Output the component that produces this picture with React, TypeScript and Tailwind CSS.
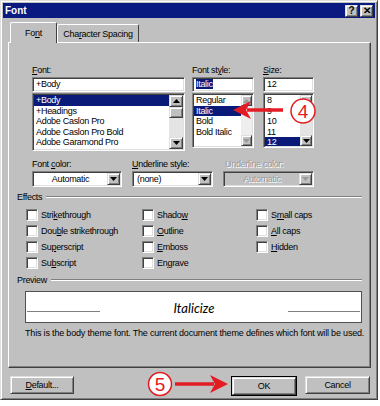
import React from "react";

const sunken =
  "border border-t-[#808080] border-l-[#808080] border-r-white border-b-white shadow-[inset_1px_1px_0_#404040,inset_-1px_-1px_0_#dfdfdf]";
const raised =
  "border border-t-[#dfdfdf] border-l-[#dfdfdf] border-r-[#404040] border-b-[#404040] shadow-[inset_1px_1px_0_#ffffff,inset_-1px_-1px_0_#808080]";

function Tri({ up, dim }: { up?: boolean; dim?: boolean }) {
  return (
    <svg width="7" height="4" viewBox="0 0 7 4">
      <path d={up ? "M3.5 0L7 4H0Z" : "M0 0h7L3.5 4Z"} fill={dim ? "#9a9a9a" : "#000"} />
    </svg>
  );
}

function ScrollBtn({ up, dim, h = 12 }: { up?: boolean; dim?: boolean; h?: number }) {
  return (
    <div
      className={`${raised} flex items-center justify-center bg-[#c0c0c0]`}
      style={{ height: h }}
    >
      <Tri up={up} dim={dim} />
    </div>
  );
}

function ListBox({
  items,
  selected,
  width,
  height,
  bar,
}: {
  items: string[];
  selected: number;
  width: number;
  height: number;
  bar: React.ReactNode;
}) {
  return (
    <div className={`${sunken} flex bg-white p-[1px]`} style={{ width, height }}>
      <div className="flex-1 overflow-hidden">
        {items.map((it, i) => (
          <div
            key={it}
            className={`h-[10.5px] px-[2px] leading-[10.5px] whitespace-nowrap ${
              i === selected ? "bg-[#0a1a78] text-white" : ""
            }`}
          >
            {it}
          </div>
        ))}
      </div>
      {bar}
    </div>
  );
}

function Dropdown({
  width,
  text,
  center,
  disabled,
}: {
  width: number;
  text: string;
  center?: boolean;
  disabled?: boolean;
}) {
  return (
    <div
      className={`${sunken} flex h-[16px] p-[1px] ${disabled ? "bg-[#c0c0c0]" : "bg-white"}`}
      style={{ width }}
    >
      <div
        className={`flex-1 px-[3px] leading-[12px] ${center ? "text-center" : ""} ${
          disabled ? "text-[#9a9a9a] [text-shadow:1px_1px_0_#fff]" : ""
        }`}
      >
        {text}
      </div>
      <div className={`${raised} flex w-[13px] items-center justify-center bg-[#c0c0c0]`}>
        <Tri dim={disabled} />
      </div>
    </div>
  );
}

function Check({ children }: { children: React.ReactNode }) {
  return (
    <div className="flex h-[16px] items-center">
      <div className={`${sunken} h-[12px] w-[12px] bg-white`} />
      <span className="ml-[3px]">{children}</span>
    </div>
  );
}

function GroupHead({ label }: { label: string }) {
  return (
    <div className="flex h-[12px] items-center">
      <span>{label}</span>
      <div className="ml-[4px] h-[2px] flex-1 border-t border-b border-t-[#808080] border-b-white" />
    </div>
  );
}

function Button({ width, children, def }: { width: number; children: React.ReactNode; def?: boolean }) {
  return (
    <div className={def ? "border border-black" : ""}>
      <div
        className={`${raised} flex h-[18px] items-center justify-center bg-[#c0c0c0]`}
        style={{ width: def ? width - 2 : width }}
      >
        {children}
      </div>
    </div>
  );
}

export default function App() {
  return (
    <div
      className="relative h-[406px] w-[380px] bg-white text-[9px] leading-[12px] tracking-[-0.3px] text-black"
      style={{ fontFamily: '"Liberation Sans", Arial, sans-serif' }}
    >
      <div className="flex h-[400px] w-[378px] flex-col border border-t-[#dfdfdf] border-l-[#dfdfdf] border-r-[#404040] border-b-[#404040] bg-[#c0c0c0] p-[2px] shadow-[inset_1px_1px_0_#ffffff,inset_-1px_-1px_0_#808080]">
        {/* title bar */}
        <div className="flex h-[15px] items-center justify-between bg-[#0a1a80] pl-[2px] pr-[2px]">
          <span className="text-[10px] font-bold tracking-normal text-white">Font</span>
          <div className="flex gap-[2px]">
            <div className={`${raised} flex h-[12px] w-[13px] items-center justify-center bg-[#c0c0c0] text-[10px] font-bold leading-none`}>
              ?
            </div>
            <div className={`${raised} flex h-[12px] w-[13px] items-center justify-center bg-[#c0c0c0] text-[10px] font-bold leading-none`}>
              ✕
            </div>
          </div>
        </div>

        {/* tabs */}
        <div className="mt-[4px] ml-[7px] flex h-[20px] items-end">
          <div className="relative z-10 -mb-[1px] flex h-[21px] w-[47px] items-center justify-center rounded-t-[2px] border border-b-0 border-t-white border-l-white border-r-[#404040] bg-[#c0c0c0]">
            Fo<u>n</u>t
          </div>
          <div className="flex h-[18px] w-[82px] items-center justify-center rounded-t-[2px] border border-b-0 border-t-white border-l-white border-r-[#404040] bg-[#c0c0c0]">
            Cha<u>r</u>acter Spacing
          </div>
        </div>

        {/* panel */}
        <div className="ml-[5px] flex h-[326px] w-[363px] flex-col border border-t-white border-l-white border-r-[#404040] border-b-[#404040] px-[8px] pt-[21px] shadow-[inset_-1px_-1px_0_#808080]">
          <div className="ml-[15px] flex">
            <div className="flex flex-col">
              <div className="h-[13px]">
                <u>F</u>ont:
              </div>
              <div className={`${sunken} h-[15px] w-[153px] bg-white px-[3px] leading-[13px]`}>+Body</div>
              <div className="mt-[1px]">
                <ListBox
                  width={153}
                  height={58}
                  selected={0}
                  items={["+Body", "+Headings", "Adobe Caslon Pro", "Adobe Caslon Pro Bold", "Adobe Garamond Pro"]}
                  bar={
                    <div className="flex w-[14px] flex-col bg-[#e4e4e4]">
                      <ScrollBtn up />
                      <div className={`${raised} h-[11px] bg-[#c0c0c0]`} />
                      <div className="flex-1" />
                      <ScrollBtn />
                    </div>
                  }
                />
              </div>
            </div>
            <div className="ml-[7px] flex flex-col">
              <div className="h-[13px]">
                Font st<u>y</u>le:
              </div>
              <div className={`${sunken} h-[15px] w-[62px] bg-white px-[3px] leading-[13px]`}>
                <span className="bg-[#0a1a78] text-white">Italic</span>
              </div>
              <div className="mt-[1px]">
                <ListBox
                  width={62}
                  height={55}
                  selected={1}
                  items={["Regular", "Italic", "Bold", "Bold Italic"]}
                  bar={
                    <div className="flex w-[11px] flex-col bg-[#eeeeee]">
                      <ScrollBtn up dim h={11} />
                      <div className="flex-1" />
                      <ScrollBtn dim h={11} />
                    </div>
                  }
                />
              </div>
            </div>
            <div className="ml-[9px] flex flex-col">
              <div className="h-[13px]">
                <u>S</u>ize:
              </div>
              <div className={`${sunken} h-[15px] w-[51px] bg-white px-[3px] leading-[13px]`}>12</div>
              <div className="mt-[1px]">
                <ListBox
                  width={51}
                  height={55}
                  selected={4}
                  items={["8", "9", "10", "11", "12"]}
                  bar={
                    <div className="flex w-[12px] flex-col bg-[#e4e4e4]">
                      <ScrollBtn up dim h={11} />
                      <div className="flex-1" />
                      <ScrollBtn h={11} />
                    </div>
                  }
                />
              </div>
            </div>
          </div>

          {/* row 2 */}
          <div className="mt-[7px] ml-[15px] flex">
            <div className="flex w-[100px] flex-col">
              <div className="h-[13px]">
                Font <u>c</u>olor:
              </div>
              <Dropdown width={90} text="Automatic" center />
            </div>
            <div className="flex w-[91px] flex-col">
              <div className="h-[13px]">
                <u>U</u>nderline style:
              </div>
              <Dropdown width={81} text="(none)" />
            </div>
            <div className="flex flex-col">
              <div className="h-[13px] pl-[2px] text-[#9a9a9a] [text-shadow:1px_1px_0_#fff]">Underline color:</div>
              <Dropdown width={91} text="Automatic" center disabled />
            </div>
          </div>

          {/* effects */}
          <div className="mt-[4px]">
            <GroupHead label="Effects" />
          </div>
          <div className="mt-[4px] ml-[9px] flex">
            <div className="w-[116px]">
              <Check>
                Stri<u>k</u>ethrough
              </Check>
              <Check>
                Dou<u>b</u>le strikethrough
              </Check>
              <Check>
                Su<u>p</u>erscript
              </Check>
              <Check>
                Su<u>b</u>script
              </Check>
            </div>
            <div className="w-[114px]">
              <Check>
                Shado<u>w</u>
              </Check>
              <Check>
                <u>O</u>utline
              </Check>
              <Check>
                <u>E</u>mboss
              </Check>
              <Check>
                En<u>g</u>rave
              </Check>
            </div>
            <div>
              <Check>
                S<u>m</u>all caps
              </Check>
              <Check>
                <u>A</u>ll caps
              </Check>
              <Check>
                <u>H</u>idden
              </Check>
            </div>
          </div>

          {/* preview */}
          <div className="mt-[3px]">
            <GroupHead label="Preview" />
          </div>
          <div className="mt-[5px] ml-[8px] flex h-[32px] items-end border border-[#505050] bg-white px-[1px] pb-[7px]">
            <div className="mb-[3px] h-px w-[73px] bg-[#808080]" />
            <div
              className="flex-1 text-center text-[13px] leading-[13px] tracking-normal italic"
              style={{ fontFamily: "Lato, 'Open Sans', sans-serif" }}
            >
              Italicize
            </div>
            <div className="mb-[3px] h-px w-[72px] bg-[#808080]" />
          </div>
          <div className="mt-[4px] ml-[8px] h-[12px] whitespace-nowrap tracking-[-0.18px]">
            This is the body theme font. The current document theme defines which font will be used.
          </div>
        </div>

        {/* buttons */}
        <div className="mt-[8px] ml-[7px] flex">
          <Button width={64}>
            <span>
              <u>D</u>efault...
            </span>
          </Button>
          <div className="ml-[157px]">
            <Button width={66} def>
              OK
            </Button>
          </div>
          <div className="ml-[8px]">
            <Button width={65}>Cancel</Button>
          </div>
        </div>
      </div>

      {/* annotations */}
      <svg className="pointer-events-none absolute top-0 left-0" width="380" height="406" viewBox="0 0 380 406">
        <line x1="247" y1="110" x2="283" y2="110" stroke="#e31b23" strokeWidth="3.5" />
        <path d="M233 110 L251 101 L246 110 L251 119 Z" fill="#e31b23" />
        <circle cx="303" cy="111" r="12" fill="#fff" stroke="#e31b23" strokeWidth="1.5" />
        <text x="303" y="118" textAnchor="middle" fontSize="19" fill="#e31b23" fontFamily="Liberation Sans, Arial, sans-serif">
          4
        </text>

        <line x1="175" y1="384" x2="214" y2="384" stroke="#e31b23" strokeWidth="3.5" />
        <path d="M228 384 L210 375 L215 384 L210 393 Z" fill="#e31b23" />
        <circle cx="160" cy="384" r="11.5" fill="#fff" stroke="#e31b23" strokeWidth="1.5" />
        <text x="160" y="391" textAnchor="middle" fontSize="19" fill="#e31b23" fontFamily="Liberation Sans, Arial, sans-serif">
          5
        </text>
      </svg>
    </div>
  );
}
